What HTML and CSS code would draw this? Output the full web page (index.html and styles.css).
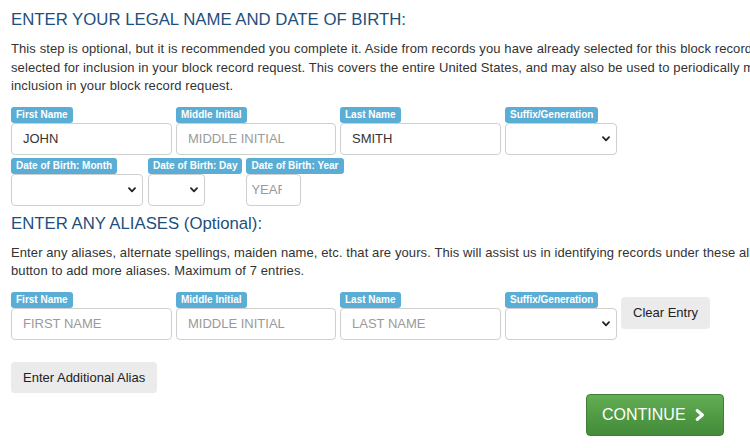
FILE: index.html
```html
<!DOCTYPE html>
<html lang="en">
<head>
<meta charset="utf-8">
<title>Block Record Request</title>
<link rel="stylesheet" href="styles.css">
</head>
<body>
<main class="page">
  <h2 class="section-title">ENTER YOUR LEGAL NAME AND DATE OF BIRTH:</h2>
  <p class="intro">
    <span class="line">This step is optional, but it is recommended you complete it. Aside from records you have already selected for this block record request, additional records found under your name may be</span>
    <span class="line">selected for inclusion in your block record request. This covers the entire United States, and may also be used to periodically monitor for new records for</span>
    <span class="line">inclusion in your block record request.</span>
  </p>

  <div class="row row-name">
    <div class="field w-first">
      <span class="tag">First Name</span>
      <input class="input" type="text" value="JOHN" placeholder="FIRST NAME">
    </div>
    <div class="field w-middle">
      <span class="tag">Middle Initial</span>
      <input class="input" type="text" placeholder="MIDDLE INITIAL">
    </div>
    <div class="field w-last">
      <span class="tag">Last Name</span>
      <input class="input" type="text" value="SMITH" placeholder="LAST NAME">
    </div>
    <div class="field w-suffix">
      <span class="tag">Suffix/Generation</span>
      <div class="select-wrap">
        <select class="select"><option></option></select>
        <svg class="chev" viewBox="0 0 8 6" width="8" height="6"><path d="M1 1.2 L4 4.3 L7 1.2" fill="none" stroke="#222" stroke-width="1.8" stroke-linecap="round" stroke-linejoin="round"/></svg>
      </div>
    </div>
  </div>

  <div class="row row-dob">
    <div class="field w-month">
      <span class="tag">Date of Birth: Month</span>
      <div class="select-wrap">
        <select class="select"><option></option></select>
        <svg class="chev" viewBox="0 0 8 6" width="8" height="6"><path d="M1 1.2 L4 4.3 L7 1.2" fill="none" stroke="#222" stroke-width="1.8" stroke-linecap="round" stroke-linejoin="round"/></svg>
      </div>
    </div>
    <div class="field w-day">
      <span class="tag">Date of Birth: Day</span>
      <div class="select-wrap day-select">
        <select class="select"><option></option></select>
        <svg class="chev" viewBox="0 0 8 6" width="8" height="6"><path d="M1 1.2 L4 4.3 L7 1.2" fill="none" stroke="#222" stroke-width="1.8" stroke-linecap="round" stroke-linejoin="round"/></svg>
      </div>
    </div>
    <div class="field w-year">
      <span class="tag">Date of Birth: Year</span>
      <input class="input year-input" type="text" placeholder="YEAR">
    </div>
  </div>

  <h2 class="section-title alias-title">ENTER ANY ALIASES (Optional):</h2>
  <p class="intro">
    <span class="line">Enter any aliases, alternate spellings, maiden name, etc. that are yours. This will assist us in identifying records under these aliases. Click the "Enter Additional Alias"</span>
    <span class="line">button to add more aliases. Maximum of 7 entries.</span>
  </p>

  <div class="row row-alias">
    <div class="field w-first">
      <span class="tag">First Name</span>
      <input class="input" type="text" placeholder="FIRST NAME">
    </div>
    <div class="field w-middle">
      <span class="tag">Middle Initial</span>
      <input class="input" type="text" placeholder="MIDDLE INITIAL">
    </div>
    <div class="field w-last">
      <span class="tag">Last Name</span>
      <input class="input" type="text" placeholder="LAST NAME">
    </div>
    <div class="field w-suffix">
      <span class="tag">Suffix/Generation</span>
      <div class="select-wrap">
        <select class="select"><option></option></select>
        <svg class="chev" viewBox="0 0 8 6" width="8" height="6"><path d="M1 1.2 L4 4.3 L7 1.2" fill="none" stroke="#222" stroke-width="1.8" stroke-linecap="round" stroke-linejoin="round"/></svg>
      </div>
    </div>
    <button class="btn btn-clear" type="button">Clear Entry</button>
  </div>

  <div class="row row-add">
    <button class="btn btn-add" type="button">Enter Additional Alias</button>
  </div>

  <div class="row row-continue">
    <button class="btn-continue" type="button">CONTINUE
      <svg class="cont-chev" viewBox="0 0 10 12" width="10" height="12"><path d="M2.3 1.6 L7.3 6 L2.3 10.4" fill="none" stroke="#fff" stroke-width="3.2" stroke-linecap="round" stroke-linejoin="round"/></svg>
    </button>
  </div>
</main>
</body>
</html>
```

FILE: styles.css
```css
html, body {
  margin: 0;
  padding: 0;
  overflow: hidden;
  background: #fff;
}

body {
  font-family: "Liberation Sans", Arial, Helvetica, sans-serif;
  color: #333;
  font-size: 13px;
}

.page {
  width: 713px;
  padding: 10px 0 0 11px;
}

.section-title {
  margin: 0;
  font-size: 16.75px;
  line-height: 20px;
  font-weight: normal;
  color: #1d4f7d;
  white-space: nowrap;
}

.alias-title {
  margin-top: 8px;
}

.intro {
  margin: 10px 0 0;
  line-height: 18.57px;
  font-size: 13px;
  letter-spacing: 0.1px;
  color: #333;
}

.intro .line {
  display: block;
  white-space: nowrap;
}

.row {
  display: flex;
  align-items: flex-start;
  gap: 4px;
}

.row-name {
  margin-top: 11px;
}

.row-dob {
  margin-top: 3px;
}

.row-dob .w-month { margin-right: 1px; }

.row-alias {
  margin-top: 11px;
}

.field {
  display: flex;
  flex-direction: column;
  align-items: flex-start;
}

.w-first { width: 161px; }
.w-middle { width: 160px; }
.w-last { width: 161px; }
.w-suffix { width: 112px; }
.w-month { width: 132px; }
.w-day { width: auto; }
.w-year { width: auto; }

.tag {
  display: inline-block;
  height: 16px;
  line-height: 16px;
  padding: 0 5px;
  font-size: 10px;
  font-weight: bold;
  color: #fff;
  background: #5aadd4;
  border-radius: 3px;
  white-space: nowrap;
}

.input {
  box-sizing: border-box;
  width: 100%;
  height: 32px;
  margin: 0;
  padding: 0 11px;
  border: 1px solid #cfcfcf;
  border-radius: 4px;
  font-family: "Liberation Sans", Arial, Helvetica, sans-serif;
  font-size: 13px;
  color: #333;
  background: #fff;
  outline: none;
}

.input::placeholder {
  color: #9a9a9a;
  opacity: 1;
}

.year-input {
  width: 55px;
  padding: 0 18px 0 4px;
}

.select-wrap {
  position: relative;
  width: 100%;
  height: 32px;
}

.day-select {
  width: 57px;
}

.select {
  box-sizing: border-box;
  appearance: none;
  -webkit-appearance: none;
  width: 100%;
  height: 32px;
  margin: 0;
  padding: 0 20px 0 8px;
  border: 1px solid #cfcfcf;
  border-radius: 4px;
  background: #fff;
  font-family: "Liberation Sans", Arial, Helvetica, sans-serif;
  font-size: 13px;
  color: #333;
  outline: none;
}

.chev {
  position: absolute;
  right: 7px;
  top: 13px;
  pointer-events: none;
}

.btn {
  box-sizing: border-box;
  height: 32px;
  padding: 0 12px;
  border: none;
  border-radius: 4px;
  background: #ebebeb;
  font-family: "Liberation Sans", Arial, Helvetica, sans-serif;
  font-size: 13px;
  color: #222;
  white-space: nowrap;
}

.btn-clear {
  margin-top: 5px;
}

.row-add {
  margin-top: 22px;
}

.btn-add {
  height: 31px;
}

.row-continue {
  justify-content: flex-end;
  margin-top: 1px;
}

.btn-continue {
  display: flex;
  align-items: center;
  gap: 9px;
  box-sizing: border-box;
  width: 138px;
  height: 42px;
  padding: 0 0 0 15px;
  border: 1px solid #3f8036;
  border-radius: 4px;
  background: linear-gradient(to bottom, #63ad54 0%, #4f9a43 55%, #458a3b 100%);
  font-family: "Liberation Sans", Arial, Helvetica, sans-serif;
  font-size: 16px;
  color: #fff;
  white-space: nowrap;
}

.cont-chev {
  display: block;
}
```
